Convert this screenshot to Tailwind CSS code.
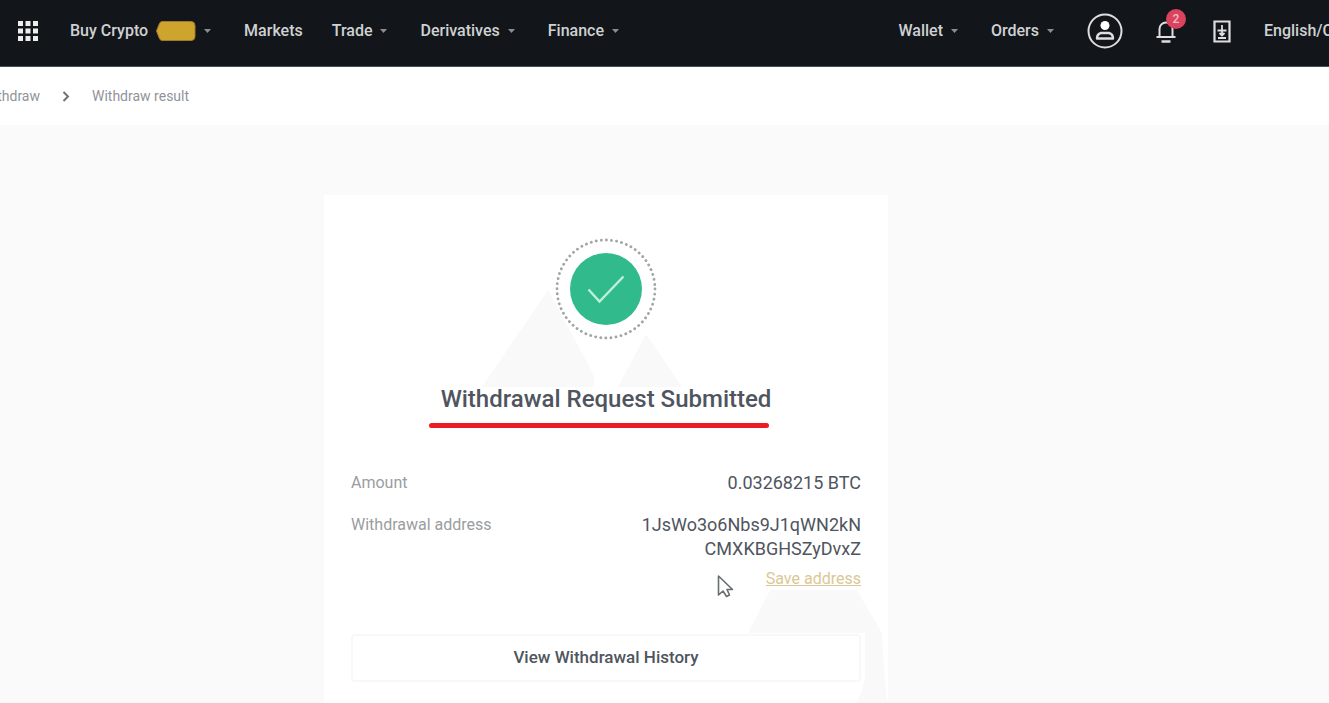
<!DOCTYPE html>
<html lang="en">
<head>
<meta charset="utf-8">
<meta name="viewport" content="width=device-width, initial-scale=1">
<title>Withdraw result</title>
<script src="https://cdn.jsdelivr.net/npm/@tailwindcss/browser@4"></script>
</head>
<body class="flex min-h-screen flex-col overflow-hidden bg-[#fafafa] font-['Roboto',sans-serif] text-[#4f555e]">
<header class="flex h-[67px] shrink-0 items-center overflow-hidden border-b border-[#4b4e50] bg-[#12161a] pb-1 text-base font-medium whitespace-nowrap text-[#cfd1d3]">
  <button aria-label="Products" class="ml-[18px] shrink-0">
    <svg class="block size-5" viewBox="0 0 20 20" fill="#eceded"><path d="M0 0h5v5H0zM7.500 0h5v5h-5zM15 0h5v5h-5zM0 7.500h5v5H0zM7.500 7.500h5v5h-5zM15 7.500h5v5h-5zM0 15h5v5H0zM7.500 15h5v5h-5zM15 15h5v5h-5z"/></svg>
  </button>
  <nav class="ml-8 flex items-center gap-[33px]">
    <button class="flex items-center gap-2">Buy Crypto
      <svg class="h-5 w-10" viewBox="0 0 40 20"><path d="M6 .5h29q4 0 4 4v11q0 4-4 4H6q-2 0-3-3L.5 10 3 3.500q1-3 3-3z" fill="#cda52d" stroke="#a5762b"/></svg>
      <svg class="h-1 w-[7px]" viewBox="0 0 7 4"><path d="M0 0h7L3.500 4z" fill="#8b8e91"/></svg>
    </button>
    <a href="#" class="-mr-1">Markets</a>
    <button class="flex items-center gap-2">Trade<svg class="h-1 w-[7px]" viewBox="0 0 7 4"><path d="M0 0h7L3.500 4z" fill="#8b8e91"/></svg></button>
    <button class="flex items-center gap-2">Derivatives<svg class="h-1 w-[7px]" viewBox="0 0 7 4"><path d="M0 0h7L3.500 4z" fill="#8b8e91"/></svg></button>
    <button class="flex items-center gap-2">Finance<svg class="h-1 w-[7px]" viewBox="0 0 7 4"><path d="M0 0h7L3.500 4z" fill="#8b8e91"/></svg></button>
  </nav>
  <div class="ml-auto flex shrink-0 items-center gap-[33px]">
    <button class="flex items-center gap-2">Wallet<svg class="h-1 w-[7px]" viewBox="0 0 7 4"><path d="M0 0h7L3.500 4z" fill="#8b8e91"/></svg></button>
    <button class="flex items-center gap-2">Orders<svg class="h-1 w-[7px]" viewBox="0 0 7 4"><path d="M0 0h7L3.500 4z" fill="#8b8e91"/></svg></button>
    <button aria-label="Account">
      <svg class="block size-9" viewBox="0 0 36 36" fill="none" stroke="#dcdedf" stroke-width="2"><circle cx="18" cy="18" r="16.500"/><circle cx="18" cy="12.500" r="4.500" fill="#fff" stroke="none"/><path d="M14 20h8q4 1 4 5.500H10q0-4.500 4-5.500z" stroke-width="2.400" stroke-linejoin="round"/></svg>
    </button>
    <button aria-label="Notifications, 2 unread" class="relative">
      <svg class="block h-6 w-5" viewBox="0 0 20 24" fill="none" stroke="#dcdedf" stroke-width="2"><path d="M3.500 17V10a6.500 6.500 0 0 1 13 0v7M.5 18h19" /><path d="M5.500 22.500h9" stroke-width="2.500"/></svg>
      <span class="absolute -top-[10px] left-[10px] flex size-5 items-center justify-center rounded-full bg-[#d9435e] text-xs text-[#f7b9c3]">2</span>
    </button>
    <button aria-label="Download app" class="ml-1">
      <svg class="block h-[23px] w-[18px]" viewBox="0 0 18 23" fill="none" stroke="#dcdedf" stroke-width="2.200"><path d="M1.500 1.500h15v20h-15z"/><path d="M9 5v10.500M4.500 10.500h9M5 18h8M6.500 13l2.500 2.500 2.500-2.500" stroke-width="1.800"/></svg>
    </button>
    <button class="w-[65px] overflow-hidden text-left">English/C</button>
  </div>
</header>
<nav aria-label="Breadcrumb" class="flex h-[58px] shrink-0 items-center overflow-hidden bg-white text-sm whitespace-nowrap text-[#909499]">
  <div class="flex w-10 shrink-0 justify-end overflow-hidden"><a href="#">Withdraw</a></div>
  <svg class="mx-[22px] h-[11px] w-2" viewBox="0 0 8 11" fill="none" stroke="#6f7377" stroke-width="2"><path d="M1.500 1l4.500 4.500L1.500 10"/></svg>
  <span>Withdraw result</span>
</nav>
<main class="flex flex-1 pt-[70px] pl-[324px]">
  <section class="relative flex w-[564px] flex-col bg-white px-[27px] pt-10 pb-5">
    <svg class="absolute top-0 left-0 h-[508px] w-[564px]" viewBox="0 0 564 508" fill="#f9f9f9" aria-hidden="true"><path d="M224 95L270 180V192H158zM322 139L358 192H294zM446 395h87l25 43H424zM541 438h17q2 50 6 70h-32q9-16 9-30z"/></svg>
    <div class="relative flex flex-col items-center">
      <svg class="h-[108px] w-[108px]" viewBox="0 0 108 108" fill="none" role="img" aria-label="Success"><circle cx="54" cy="54" r="49" stroke="#a0a6a6" stroke-width="2.800" stroke-linecap="round" stroke-dasharray="0.100 5.031"/><circle cx="54" cy="54" r="36" fill="#31bb8c"/><path d="M36.500 54.500l11 12 24-25" stroke="#c0f0dc" stroke-width="2.400"/></svg>
      <h1 class="mt-10 text-2xl leading-8 font-medium whitespace-nowrap">Withdrawal Request Submitted</h1>
      <div class="mt-2 mr-[14px] h-[5px] w-[340px] rounded-full bg-[#ed1c24]"></div>
    </div>
    <dl class="relative mt-[43px] flex flex-col gap-[18px] leading-6">
      <div class="flex justify-between"><dt class="text-base text-[#999da1]">Amount</dt><dd class="text-lg leading-6">0.03268215 BTC</dd></div>
      <div class="flex justify-between"><dt class="text-base text-[#999da1]">Withdrawal address</dt><dd class="text-right text-lg leading-6">1JsWo3o6Nbs9J1qWN2kN<br>CMXKBGHSZyDvxZ<br><a href="#" class="mt-2 inline-block text-base leading-5 text-[#dbc795] underline">Save address</a></dd></div>
    </dl>
    <button class="relative mt-11 h-12 rounded-sm border-2 border-[#f7f8f8] bg-white text-[17px] font-medium">View Withdrawal History</button>
    <svg class="absolute top-[379px] left-[393px] h-6 w-[17px]" viewBox="0 0 17 24" fill="#fff" stroke="#686d72" stroke-width="1.600" aria-hidden="true"><path d="M1.500 2v19l4.500-4 3.500 5.500 3-1.500-2.500-5.500h5.500z" stroke-linejoin="round"/></svg>
  </section>
</main>
</body>
</html>
